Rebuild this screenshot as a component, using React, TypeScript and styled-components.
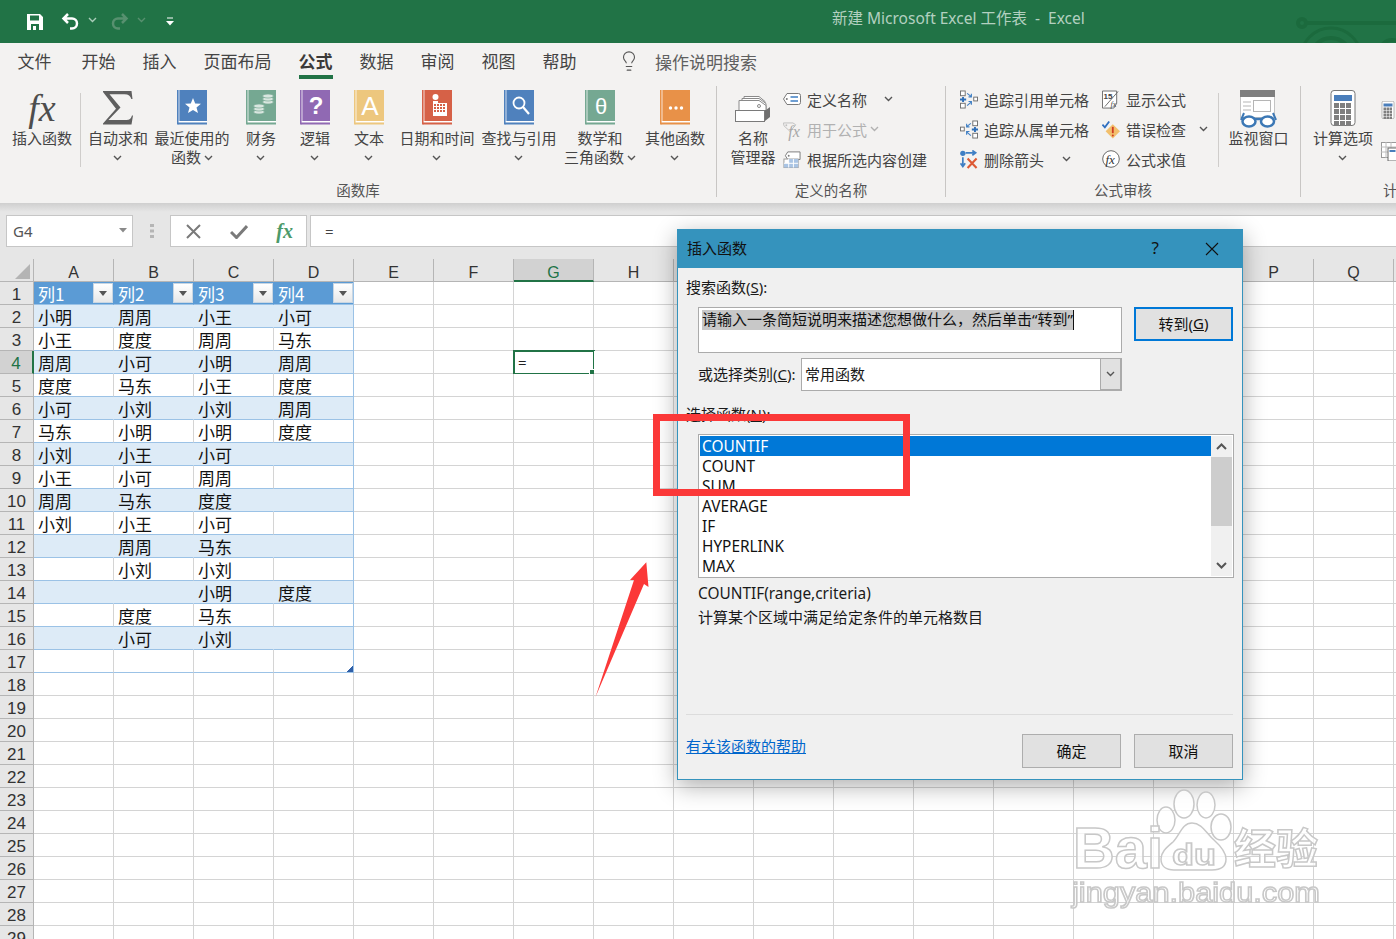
import React from 'react';
import styled, { createGlobalStyle } from 'styled-components';
import { Lightbulb } from 'lucide-react';

const CJK = `"Noto Sans CJK SC", sans-serif`;
const LATIN = `"Noto Sans", "Noto Sans CJK SC", sans-serif`;

const GlobalStyle = createGlobalStyle`
  html, body {
    margin: 0;
    padding: 0;
    background: #fff;
  }
  * {
    box-sizing: border-box;
  }
`;

const Page = styled.div`
  position: relative;
  width: 1396px;
  height: 939px;
  overflow: hidden;
  display: flex;
  flex-direction: column;
  font-family: ${CJK};
  color: #444;
`;

/* ---------- title bar ---------- */

const TitleBar = styled.div`
  position: relative;
  flex: none;
  height: 43px;
  background: #217346;
  display: flex;
  align-items: center;
  padding-left: 27px;
`;

const QuickButton = styled.span<{ $ml?: number; $mb?: number }>`
  display: flex;
  margin-left: ${(p) => p.$ml ?? 0}px;
  margin-bottom: ${(p) => p.$mb ?? 0}px;
`;

const DocTitle = styled.div`
  margin-left: 658px;
  margin-top: -9px;
  font-family: ${LATIN};
  font-size: 15.5px;
  color: #b3d0c0;
  white-space: pre;
`;

const TitleArt = styled.svg`
  position: absolute;
  right: 0;
  top: 0;
`;

/* ---------- ribbon tabs ---------- */

const TabBar = styled.div`
  flex: none;
  height: 36px;
  background: #f3f2f1;
  display: flex;
  padding-left: 4px;
`;

const Tab = styled.div<{ $active?: boolean }>`
  position: relative;
  height: 36px;
  padding: 0 13.5px;
  font-size: 17px;
  line-height: 36px;
  font-weight: ${(p) => (p.$active ? 700 : 400)};
  color: ${(p) => (p.$active ? '#3b3a39' : '#444')};
  &:first-child {
    margin-right: 3px;
  }
  &::after {
    content: '';
    display: ${(p) => (p.$active ? 'block' : 'none')};
    position: absolute;
    left: 13.5px;
    right: 13.5px;
    bottom: 0;
    height: 4px;
    background: #217346;
  }
`;

const TellMe = styled.div`
  display: flex;
  align-items: center;
  margin-left: 28px;
  font-size: 17px;
  color: #5f5f5f;
  gap: 15px;
`;

/* ---------- ribbon body ---------- */

const Ribbon = styled.div`
  flex: none;
  height: 124px;
  background: #f3f2f1;
  padding-top: 7px;
  display: flex;
`;

const Group = styled.div<{ $w: number }>`
  flex: none;
  width: ${(p) => p.$w}px;
  height: 111px;
  border-right: 1px solid #c8c6c4;
  display: flex;
  flex-direction: column;
`;

const GroupBody = styled.div<{ $pl: number }>`
  flex: 1;
  display: flex;
  padding-left: ${(p) => p.$pl}px;
`;

const GroupLabel = styled.div`
  flex: none;
  height: 22px;
  line-height: 22px;
  margin-bottom: -4px;
  text-align: center;
  font-size: 14.5px;
  color: #555;
`;

const BigButton = styled.div<{ $w: number }>`
  flex: none;
  width: ${(p) => p.$w}px;
  padding-top: 4px;
  display: flex;
  flex-direction: column;
  align-items: center;
`;

const BigIcon = styled.div<{ $pt?: number }>`
  height: 36px;
  padding-top: ${(p) => p.$pt ?? 0}px;
  display: flex;
  align-items: flex-start;
  justify-content: center;
`;

const BigText = styled.div`
  margin-top: 2px;
  font-size: 15px;
  line-height: 19px;
  color: #444;
  text-align: center;
  white-space: nowrap;
`;

const Caret = styled.svg<{ $ml?: number }>`
  margin-left: ${(p) => p.$ml ?? 0}px;
  vertical-align: 2px;
  display: inline-block;
`;

const VLine = styled.div<{ $ml?: number; $mr?: number }>`
  flex: none;
  width: 1px;
  height: 74px;
  margin: 7px ${(p) => p.$mr ?? 0}px 0 ${(p) => p.$ml ?? 0}px;
  background: #cfcdcb;
`;

const SmallList = styled.div<{ $w: number; $ml?: number }>`
  flex: none;
  width: ${(p) => p.$w}px;
  margin-top: -2px;
  margin-left: ${(p) => p.$ml ?? 0}px;
`;

const SmallRow = styled.div<{ $off?: boolean }>`
  height: 30px;
  display: flex;
  align-items: center;
  gap: 6px;
  font-size: 15px;
  white-space: nowrap;
  color: ${(p) => (p.$off ? '#b1b1b1' : '#444')};
`;

const SmallIconBox = styled.span`
  flex: none;
  width: 18px;
  height: 18px;
  display: flex;
`;

const SideIcons = styled.div`
  flex: none;
  margin-left: 5px;
  padding-top: 15px;
  display: flex;
  flex-direction: column;
  gap: 23px;
`;

/* ---------- formula bar ---------- */

const FormulaBar = styled.div`
  flex: none;
  height: 56px;
  padding: 12px 0 0 6px;
  display: flex;
  align-items: flex-start;
  background: linear-gradient(#cfcfcf 0, #e6e6e6 9px);
`;

const NameBox = styled.div`
  flex: none;
  width: 127px;
  height: 32px;
  background: #fff;
  border: 1px solid #c6c6c6;
  display: flex;
  align-items: center;
`;

const ActionBox = styled(NameBox)`
  width: 137px;
  justify-content: space-between;
  padding: 0 13px 0 15px;
`;

const FormulaInput = styled(NameBox)`
  flex: 1;
  width: auto;
  margin-left: 3px;
  border-right: none;
`;

const NameValue = styled.span`
  flex: 1;
  padding-left: 6px;
  font-family: ${LATIN};
  font-size: 15px;
  color: #555;
`;

const Grip = styled.div`
  flex: none;
  width: 37px;
  height: 32px;
  display: flex;
  align-items: center;
  justify-content: center;
`;

const FxMark = styled.span`
  font-family: 'Liberation Serif', serif;
  font-style: italic;
  font-weight: 700;
  font-size: 20px;
  color: #4c9a6a;
`;

const FormulaText = styled.span`
  padding-left: 14px;
  font-family: ${LATIN};
  font-size: 15px;
  color: #444;
`;

/* ---------- sheet ---------- */

const Sheet = styled.div`
  flex: 1;
  min-height: 0;
  display: flex;
  flex-direction: column;
  font-family: ${CJK};
`;

const SheetRow = styled.div`
  flex: none;
  height: 23px;
  display: flex;
`;

const Corner = styled.div`
  flex: none;
  width: 34px;
  background: #e6e6e6;
  border-right: 1px solid #b5b5b5;
  border-bottom: 1px solid #b5b5b5;
  display: flex;
  align-items: flex-end;
  justify-content: flex-end;
  padding: 0 3px 2px 0;
`;

const ColHead = styled.div<{ $on?: boolean }>`
  flex: none;
  width: 80px;
  background: ${(p) => (p.$on ? '#d2d2d2' : '#e6e6e6')};
  border-right: 1px solid #b5b5b5;
  border-bottom: ${(p) => (p.$on ? '2px solid #217346' : '1px solid #b5b5b5')};
  padding-top: 3px;
  text-align: center;
  font-family: 'Liberation Sans', sans-serif;
  font-size: 16px;
  line-height: 22px;
  color: ${(p) => (p.$on ? '#217346' : '#333')};
`;

const RowHead = styled.div<{ $on?: boolean }>`
  flex: none;
  width: 34px;
  background: ${(p) => (p.$on ? '#d2d2d2' : '#e6e6e6')};
  border-right: ${(p) => (p.$on ? '2px solid #217346' : '1px solid #b5b5b5')};
  border-bottom: 1px solid #b5b5b5;
  text-align: center;
  font-family: 'Liberation Sans', sans-serif;
  font-size: 17px;
  line-height: 25px;
  color: ${(p) => (p.$on ? '#217346' : '#333')};
`;

type Tone = 'plain' | 'head' | 'band' | 'body';

const toneBg: Record<Tone, string> = { plain: '#fff', head: '#5b9bd5', band: '#ddebf7', body: '#fff' };

const Cell = styled.div<{ $tone: Tone; $last?: boolean }>`
  position: relative;
  flex: none;
  width: 80px;
  height: 23px;
  padding-left: 4px;
  display: flex;
  align-items: center;
  background: ${(p) => toneBg[p.$tone]};
  border-bottom: 1px solid ${(p) => (p.$tone === 'plain' ? '#d4d4d4' : '#9bc2e6')};
  border-right: 1px solid
    ${(p) =>
      p.$last
        ? '#9bc2e6'
        : p.$tone === 'plain' || p.$tone === 'body'
          ? '#d4d4d4'
          : toneBg[p.$tone]};
  font-size: 17px;
  color: ${(p) => (p.$tone === 'head' ? '#fff' : '#111')};
`;

const FilterButton = styled.span`
  flex: none;
  margin-left: auto;
  width: 20px;
  height: 20px;
  background: linear-gradient(#fff, #e8e8e8);
  border: 1px solid #c9d6e2;
  display: flex;
  align-items: center;
  justify-content: center;
  &::after {
    content: '';
    border: 4px solid transparent;
    border-top: 5px solid #555;
    border-bottom: 0;
  }
`;

const ActiveFrame = styled.div`
  position: absolute;
  left: -1px;
  top: -1px;
  width: 82px;
  height: 25px;
  border: 2px solid #217346;
  padding-left: 3px;
  font-family: ${LATIN};
  font-size: 15px;
  line-height: 20px;
  color: #222;
  &::after {
    content: '';
    position: absolute;
    right: -3px;
    bottom: -3px;
    width: 5px;
    height: 5px;
    background: #217346;
    border: 1px solid #fff;
  }
`;

const ResizeCorner = styled.span`
  position: absolute;
  right: 0;
  bottom: 0;
  width: 6px;
  height: 6px;
  background: linear-gradient(135deg, transparent 45%, #2f5fa8 45%);
`;

/* ---------- dialog ---------- */

const Dialog = styled.div`
  position: absolute;
  left: 677px;
  top: 229px;
  width: 566px;
  height: 551px;
  background: #f0f0f0;
  border: 1px solid #3593bd;
  box-shadow: 0 6px 22px rgba(0, 0, 0, 0.32);
  display: flex;
  flex-direction: column;
  font-family: ${LATIN};
  font-size: 15px;
  color: #1a1a1a;
`;

const DialogHead = styled.div`
  flex: none;
  height: 38px;
  background: #3593bd;
  display: flex;
  align-items: center;
  padding: 0 23px 0 9px;
  font-size: 15px;
  color: #111;
`;

const HeadTitle = styled.span`
  flex: 1;
  margin-top: -4px;
`;

const HeadHelp = styled.span`
  margin-right: 46px;
  font-size: 17px;
  margin-top: -3px;
`;

const DialogBody = styled.div`
  flex: 1;
  display: flex;
  flex-direction: column;
  padding: 9px 9px 11px 8px;
`;

const FieldLabel = styled.div<{ $mt?: number }>`
  height: 20px;
  line-height: 20px;
  margin-top: ${(p) => p.$mt ?? 0}px;
  white-space: nowrap;
`;

const Indented = styled.div<{ $mt: number }>`
  display: flex;
  margin-top: ${(p) => p.$mt}px;
  margin-left: 12px;
`;

const SearchBox = styled.div`
  flex: none;
  width: 424px;
  height: 46px;
  background: #fff;
  border: 1px solid #ababab;
  padding: 2px 0 0 3px;
  display: flex;
  align-items: flex-start;
`;

const SearchSelection = styled.span`
  background: #c8c8c8;
  height: 20px;
  line-height: 19px;
  border-right: 1px solid #111;
  white-space: nowrap;
  color: #111;
`;

const PushButton = styled.div<{ $focus?: boolean; $ml?: number }>`
  flex: none;
  width: 99px;
  height: 34px;
  margin-left: ${(p) => p.$ml ?? 0}px;
  padding-bottom: 2px;
  background: #e1e1e1;
  border: ${(p) => (p.$focus ? '2px solid #0078d7' : '1px solid #adadad')};
  display: flex;
  align-items: center;
  justify-content: center;
  color: #111;
`;

const CategoryLabel = styled.span`
  flex: none;
  width: 103px;
  line-height: 33px;
  white-space: nowrap;
`;

const SelectBox = styled.div`
  flex: none;
  width: 321px;
  height: 33px;
  background: #fff;
  border: 1px solid #ababab;
  padding-left: 3px;
  display: flex;
  align-items: center;
`;

const SelectValue = styled.span`
  flex: 1;
  margin-top: -2px;
`;

const SelectArrow = styled.span`
  flex: none;
  width: 21px;
  height: 31px;
  background: #e1e1e1;
  border-left: 1px solid #ababab;
  border-right: 1px solid #ababab;
  border-bottom: 1px solid #ababab;
  display: flex;
  align-items: center;
  justify-content: center;
`;

const FunctionList = styled.div`
  flex: none;
  width: 536px;
  height: 144px;
  background: #fff;
  border: 1px solid #ababab;
  padding: 1px;
  display: flex;
  overflow: hidden;
`;

const ListItems = styled.div`
  flex: 1;
`;

const ListItem = styled.div<{ $on?: boolean }>`
  height: 20px;
  line-height: 22px;
  padding-left: 2px;
  font-size: 15.4px;
  background: ${(p) => (p.$on ? '#0078d7' : 'transparent')};
  color: ${(p) => (p.$on ? '#fff' : '#111')};
`;

const ScrollTrack = styled.div`
  flex: none;
  width: 21px;
  background: #f0f0f0;
  display: flex;
  flex-direction: column;
  align-items: center;
`;

const ScrollEnd = styled.span`
  height: 21px;
  display: flex;
  align-items: center;
  justify-content: center;
`;

const ScrollThumb = styled.span`
  width: 100%;
  height: 69px;
  background: #cdcdcd;
`;

const ScrollFill = styled.span`
  flex: 1;
`;

const DetailLine = styled.div<{ $size: number; $lh: number }>`
  margin: 5px 0 0 12px;
  height: 20px;
  line-height: ${(p) => p.$lh}px;
  white-space: nowrap;
  font-size: ${(p) => p.$size}px;
`;

const Spacer = styled.div`
  flex: 1;
`;

const Divider = styled.div`
  flex: none;
  height: 1px;
  background: #dcdcdc;
`;

const DialogFoot = styled.div`
  flex: none;
  margin-top: 19px;
  display: flex;
  align-items: flex-start;
`;

const HelpLink = styled.a`
  flex: 1;
  margin-top: 2px;
  color: #0066cc;
  font-size: 15px;
  line-height: 20px;
  text-decoration: underline;
`;

/* ---------- annotations ---------- */

const RedFrame = styled.div`
  position: absolute;
  left: 653px;
  top: 414px;
  width: 257px;
  height: 82px;
  border: 7px solid #fb3838;
`;

const Overlay = styled.svg`
  position: absolute;
  left: 0;
  top: 0;
  pointer-events: none;
`;

/* ---------- icons ---------- */

const Chevron = ({ ml, color = '#555' }: { ml?: number; color?: string }) => (
  <Caret $ml={ml} width="9" height="6" viewBox="0 0 9 6">
    <path d="M1 1l3.5 3.5L8 1" fill="none" stroke={color} strokeWidth="1.4" />
  </Caret>
);

const Book = ({ color, children }: { color: string; children?: React.ReactNode }) => (
  <svg width="30" height="35" viewBox="0 0 30 35">
    <rect x="0" y="0" width="30" height="31" fill={color} />
    <rect x="1.5" y="0" width="1" height="31" fill="#fff" opacity="0.75" />
    <rect x="1.5" y="31" width="28.5" height="1.5" fill="#fff" />
    <rect x="0" y="31" width="1.5" height="3.5" fill={color} />
    <rect x="1" y="32.5" width="29" height="2" fill={color} />
    {children}
  </svg>
);

const Gridlet = ({ x, y, n, m, s, fill }: { x: number; y: number; n: number; m: number; s: number; fill: string }) => (
  <g fill={fill}>
    {Array.from({ length: n * m }).map((_, i) => (
      <rect key={i} x={x + (i % n) * (s + 1)} y={y + Math.floor(i / n) * (s + 1)} width={s} height={s} />
    ))}
  </g>
);

const SigmaIcon = () => (
  <svg width="30" height="35" viewBox="0 0 30 35">
    <path d="M0 1H28.500L29.500 9H28.300C27.500 6 25.500 4.200 21.500 4.200H6.500L17.500 17.500 5.500 30H23.500C26.500 30 28 28.500 29 25.500H30L28.500 34.500H0V33.500L13 18.800 0 2z" fill="#5f5f5f" />
  </svg>
);

const FxText = styled.span`
  font-family: 'Liberation Serif', serif;
  font-style: italic;
  font-size: 38px;
  line-height: 36px;
  color: #4d4d4d;
`;

const NameManagerIcon = () => (
  <svg width="36" height="26" viewBox="0 0 36 26">
    <g fill="#fff" stroke="#8a8a8a">
      <path d="M9 .5h15l6 5v7H9z" />
      <path d="M7 2.500h17l7 5v7H7z" />
      <path d="M4 4.500h20l7 5v7H4z" />
    </g>
    <circle cx="24" cy="10" r="1.500" fill="none" stroke="#8a8a8a" />
    <path d="M31 14l4-3v10l-5 4V14z" fill="#6f6f6f" />
    <rect x="0.500" y="14.500" width="29" height="11" fill="#fff" stroke="#7a7a7a" />
  </svg>
);

const TagIcon = () => (
  <svg width="18" height="18" viewBox="0 0 18 18">
    <path d="M4 3.500h11.500a2 2 0 012 2v7a2 2 0 01-2 2H4L.5 9z" fill="#fff" stroke="#7a7a7a" />
    <circle cx="3.800" cy="9" r="1" fill="#7a7a7a" />
    <path d="M7.500 7h7.500M7.500 11h7.500" stroke="#3f7fc4" strokeWidth="1.300" />
  </svg>
);

const TagFxIcon = () => (
  <svg width="19" height="22" viewBox="0 0 19 22">
    <path d="M.5 2.500h10l3 2-6 7-6.500-6z" fill="none" stroke="#c0c0c0" />
    <circle cx="3.500" cy="5" r="1" fill="#c0c0c0" />
    <text x="5.500" y="17" fontFamily="Liberation Serif, serif" fontStyle="italic" fontSize="17" fill="#a8a8a8">fx</text>
  </svg>
);

const TagTableIcon = () => (
  <svg width="19" height="19" viewBox="0 0 19 19">
    <path d="M5 1.500h13v8H5L2.500 5.500z" fill="#fff" stroke="#7a7a7a" />
    <circle cx="6" cy="5.500" r="1" fill="#7a7a7a" />
    <rect x="1" y="9" width="15" height="9" fill="#fff" stroke="#9a9a9a" />
    <rect x="6" y="9" width="10" height="4.500" fill="#a9c4e4" />
    <rect x="1" y="13.500" width="15" height="4.500" fill="#a9c4e4" />
    <path d="M6 9v9M11 9v9M1 13.500h15" stroke="#fff" />
  </svg>
);

const TraceIcon = ({ flip }: { flip?: boolean }) => (
  <svg width="19" height="19" viewBox="0 0 19 19">
    <g transform={flip ? 'translate(19 0) scale(-1 1)' : undefined}>
      <g fill="#fff" stroke="#6f6f6f">
        <rect x="0.500" y="0.500" width="5" height="5" />
        <rect x="0.500" y="13.500" width="5" height="5" />
        <rect x="14.500" y="7" width="4" height="4" />
      </g>
      <path d="M0 9.500h6.500M3.200 6.800v5.400" stroke="#2f6fb8" strokeWidth="2" fill="none" />
      <path d="M7.500 3l4.500 3.500M12 3.500v3.200H9M7.500 16l4.500-4M12 15v-3.400H9" fill="none" stroke="#3f7fc4" strokeWidth="1.200" />
    </g>
  </svg>
);

const RemoveArrowsIcon = () => (
  <svg width="19" height="19" viewBox="0 0 19 19">
    <circle cx="3" cy="3" r="2.800" fill="#3f7fc4" />
    <path d="M6 2.500h10M13 0l3.500 2.500L13 5M3 7v10M.5 13.500L3 17l2.500-3.500" fill="none" stroke="#3f7fc4" strokeWidth="1.800" />
    <path d="M8 8.500l9.500 10M17.500 8.500L8 18.500" stroke="#dd5a35" strokeWidth="2.200" />
  </svg>
);

const ShowFormulaIcon = () => (
  <svg width="19" height="20" viewBox="0 0 19 20">
    <path d="M.5.500h15v13l-3 5H.5z" fill="#fff" stroke="#6a6a6a" />
    <path d="M3 17L17 1" stroke="#6a6a6a" />
    <text x="1.500" y="9" fontFamily="Liberation Sans, sans-serif" fontWeight="700" fontSize="8.500" fill="#444">15</text>
    <text x="9" y="17" fontFamily="Liberation Serif, serif" fontStyle="italic" fontSize="8.500" fill="#444">fx</text>
  </svg>
);

const ErrorCheckIcon = () => (
  <svg width="20" height="20" viewBox="0 0 20 20">
    <path d="M12 3.500l8 8-8 8-8-8z" fill="#f2bf6c" />
    <path d="M12 6.500v7" stroke="#d13b22" strokeWidth="2" />
    <circle cx="12" cy="16" r="1.100" fill="#d13b22" />
    <path d="M.5 4l2.700 3L8 .5" fill="none" stroke="#2f6fc0" strokeWidth="2" />
  </svg>
);

const EvalIcon = () => (
  <svg width="18" height="18" viewBox="0 0 18 18">
    <circle cx="9" cy="9" r="8.300" fill="#fff" stroke="#6a6a6a" />
    <text x="3.500" y="13.500" fontFamily="Liberation Serif, serif" fontStyle="italic" fontSize="13" fill="#333">fx</text>
  </svg>
);

const WatchIcon = () => (
  <svg width="38" height="38" viewBox="0 0 38 38">
    <rect x="0.500" y="0.500" width="34" height="27" fill="#fff" stroke="#c4c4c4" />
    <rect x="0" y="0" width="35" height="7" fill="#7f7f7f" />
    <rect x="13.500" y="10.500" width="17" height="11" fill="#fff" stroke="#b5b5b5" />
    <path d="M3 12h8M3 16h8M3 20h8" stroke="#b5b5b5" />
    <path d="M1 30l3-7M36 30l-3-7" stroke="#3c78b5" strokeWidth="2" fill="none" />
    <ellipse cx="9" cy="31.500" rx="6.500" ry="5" fill="#fff" stroke="#3c78b5" strokeWidth="2.500" />
    <ellipse cx="27.500" cy="31.500" rx="6.500" ry="5" fill="#fff" stroke="#3c78b5" strokeWidth="2.500" />
    <path d="M14 29h8" stroke="#3c78b5" strokeWidth="2.500" />
  </svg>
);

const CalcIcon = ({ small }: { small?: boolean }) => (
  <svg width={small ? 14 : 26} height={small ? 18 : 36} viewBox="0 0 26 36">
    <rect x="1" y="0.500" width="24" height="35" rx="3" fill="#fff" stroke="#777" />
    <rect x="4" y="5" width="18" height="6" fill="#4a7ebb" />
    <Gridlet x={4} y={13} n={3} m={4} s={5} fill="#7f7f7f" />
  </svg>
);

const SheetCalcIcon = () => (
  <svg width="16" height="19" viewBox="0 0 16 19">
    <rect x="0.500" y="0.500" width="15" height="15" fill="#fff" stroke="#9a9a9a" />
    <path d="M0 5h16M0 10h16M5 0v16M10 0v16" stroke="#bcbcbc" />
    <rect x="7" y="6" width="9" height="13" fill="#fff" stroke="#6a6a6a" />
    <rect x="8.500" y="8" width="6" height="2" fill="#4a7ebb" />
  </svg>
);

const SmallChevronRow = ({ icon, text, off, gap }: { icon: React.ReactNode; text: string; off?: boolean; gap?: number }) => (
  <SmallRow $off={off}>
    <SmallIconBox>{icon}</SmallIconBox>
    <span>{text}</span>
    {gap !== undefined && <Chevron ml={gap} color={off ? '#b1b1b1' : '#555'} />}
  </SmallRow>
);

/* ---------- data ---------- */

const tabs = ['文件', '开始', '插入', '页面布局', '公式', '数据', '审阅', '视图', '帮助'];

const libraryButtons: { w: number; lines: string[]; inlineCaret?: boolean; icon: React.ReactNode }[] = [
  { w: 64, lines: ['自动求和'], icon: <SigmaIcon /> },
  {
    w: 84,
    lines: ['最近使用的', '函数'],
    inlineCaret: true,
    icon: (
      <Book color="#4f81bd">
        <polygon points="16,8 18.200,13.500 24,13.800 19.500,17.500 21,23 16,20 11,23 12.500,17.500 8,13.800 13.800,13.500" fill="#fff" />
      </Book>
    ),
  },
  {
    w: 54,
    lines: ['财务'],
    icon: (
      <Book color="#75a892">
        <g fill="#d8e6df" stroke="#75a892" strokeWidth="0.700">
          <ellipse cx="22" cy="12" rx="5.500" ry="2" />
          <ellipse cx="22" cy="9" rx="5.500" ry="2" />
          <ellipse cx="22" cy="6" rx="5.500" ry="2" />
          <ellipse cx="13" cy="22" rx="5.500" ry="2" />
          <ellipse cx="13" cy="19" rx="5.500" ry="2" />
          <ellipse cx="13" cy="16" rx="5.500" ry="2" />
        </g>
      </Book>
    ),
  },
  {
    w: 54,
    lines: ['逻辑'],
    icon: (
      <Book color="#9069b3">
        <text x="16" y="24" textAnchor="middle" fontFamily="Liberation Sans, sans-serif" fontWeight="700" fontSize="24" fill="#fff">?</text>
      </Book>
    ),
  },
  {
    w: 54,
    lines: ['文本'],
    icon: (
      <Book color="#edc77e">
        <text x="16" y="25" textAnchor="middle" fontFamily="Liberation Sans, sans-serif" fontSize="26" fill="#fff">A</text>
      </Book>
    ),
  },
  {
    w: 82,
    lines: ['日期和时间'],
    icon: (
      <Book color="#d66147">
        <circle cx="13.500" cy="7" r="3" fill="#fff" />
        <rect x="11" y="11" width="5" height="3" fill="#fff" />
        <rect x="11" y="13" width="14" height="13" fill="#fff" />
        <Gridlet x={12} y={14} n={4} m={3} s={2} fill="#d66147" />
      </Book>
    ),
  },
  {
    w: 82,
    lines: ['查找与引用'],
    icon: (
      <Book color="#4f81bd">
        <circle cx="15" cy="13" r="5.500" fill="none" stroke="#fff" strokeWidth="1.800" />
        <path d="M19 17l6 7" stroke="#fff" strokeWidth="2.200" />
      </Book>
    ),
  },
  {
    w: 80,
    lines: ['数学和', '三角函数'],
    inlineCaret: true,
    icon: (
      <Book color="#75a892">
        <text x="16" y="24" textAnchor="middle" fontFamily="Liberation Sans, sans-serif" fontSize="22" fill="#fff">θ</text>
      </Book>
    ),
  },
  {
    w: 70,
    lines: ['其他函数'],
    icon: (
      <Book color="#e89148">
        <circle cx="10.500" cy="18" r="1.700" fill="#fff" />
        <circle cx="16" cy="18" r="1.700" fill="#fff" />
        <circle cx="21.500" cy="18" r="1.700" fill="#fff" />
      </Book>
    ),
  },
];

const columns = 'ABCDEFGHIJKLMNOPQR'.split('');

const tableRows: string[][] = [
  ['小明', '周周', '小王', '小可'],
  ['小王', '度度', '周周', '马东'],
  ['周周', '小可', '小明', '周周'],
  ['度度', '马东', '小王', '度度'],
  ['小可', '小刘', '小刘', '周周'],
  ['马东', '小明', '小明', '度度'],
  ['小刘', '小王', '小可', ''],
  ['小王', '小可', '周周', ''],
  ['周周', '马东', '度度', ''],
  ['小刘', '小王', '小可', ''],
  ['', '周周', '马东', ''],
  ['', '小刘', '小刘', ''],
  ['', '', '小明', '度度'],
  ['', '度度', '马东', ''],
  ['', '小可', '小刘', ''],
  ['', '', '', ''],
];

const functions = ['COUNTIF', 'COUNT', 'SUM', 'AVERAGE', 'IF', 'HYPERLINK', 'MAX'];

/* ---------- sheet parts ---------- */

function SheetGrid() {
  const rows = Array.from({ length: 29 }, (_, i) => i + 1);
  return (
    <Sheet>
      <SheetRow>
        <Corner>
          <svg width="15" height="15" viewBox="0 0 15 15">
            <polygon points="15,0 15,15 0,15" fill="#b4b4b4" />
          </svg>
        </Corner>
        {columns.map((c) => (
          <ColHead key={c} $on={c === 'G'}>{c}</ColHead>
        ))}
      </SheetRow>
      {rows.map((n) => {
        const data = n >= 2 && n <= 17 ? tableRows[n - 2] : null;
        return (
          <SheetRow key={n}>
            <RowHead $on={n === 4}>{n}</RowHead>
            {columns.map((c, ci) => {
              if (n === 1 && ci < 4) {
                return (
                  <Cell key={c} $tone="head" $last={ci === 3}>
                    列{ci + 1}
                    <FilterButton />
                  </Cell>
                );
              }
              if (data && ci < 4) {
                return (
                  <Cell key={c} $tone={n % 2 === 0 ? 'band' : 'body'} $last={ci === 3}>
                    {data[ci]}
                    {n === 17 && ci === 3 && <ResizeCorner />}
                  </Cell>
                );
              }
              return (
                <Cell key={c} $tone="plain">
                  {n === 4 && c === 'G' && <ActiveFrame>=</ActiveFrame>}
                </Cell>
              );
            })}
          </SheetRow>
        );
      })}
    </Sheet>
  );
}

function InsertFunctionDialog() {
  return (
    <Dialog>
      <DialogHead>
        <HeadTitle>插入函数</HeadTitle>
        <HeadHelp>?</HeadHelp>
        <svg width="14" height="14" viewBox="0 0 14 14">
          <path d="M1 1l12 12M13 1L1 13" stroke="#111" strokeWidth="1.100" />
        </svg>
      </DialogHead>
      <DialogBody>
        <FieldLabel>搜索函数(<u>S</u>):</FieldLabel>
        <Indented $mt={10}>
          <SearchBox>
            <SearchSelection>请输入一条简短说明来描述您想做什么，然后单击“转到”</SearchSelection>
          </SearchBox>
          <PushButton $focus $ml={12}>转到(<u>G</u>)</PushButton>
        </Indented>
        <Indented $mt={5}>
          <CategoryLabel>或选择类别(<u>C</u>):</CategoryLabel>
          <SelectBox>
            <SelectValue>常用函数</SelectValue>
            <SelectArrow>
              <Chevron />
            </SelectArrow>
          </SelectBox>
        </Indented>
        <FieldLabel $mt={13}>选择函数(<u>N</u>):</FieldLabel>
        <Indented $mt={10}>
          <FunctionList>
            <ListItems>
              {functions.map((f, i) => (
                <ListItem key={f} $on={i === 0}>{f}</ListItem>
              ))}
            </ListItems>
            <ScrollTrack>
              <ScrollEnd>
                <svg width="11" height="7" viewBox="0 0 11 7">
                  <path d="M1 6l4.500-4.500L10 6" fill="none" stroke="#555" strokeWidth="2" />
                </svg>
              </ScrollEnd>
              <ScrollThumb />
              <ScrollFill />
              <ScrollEnd>
                <svg width="11" height="7" viewBox="0 0 11 7">
                  <path d="M1 1l4.500 4.500L10 1" fill="none" stroke="#555" strokeWidth="2" />
                </svg>
              </ScrollEnd>
            </ScrollTrack>
          </FunctionList>
        </Indented>
        <DetailLine $size={15.4} $lh={22}>COUNTIF(range,criteria)</DetailLine>
        <DetailLine $size={15} $lh={18}>计算某个区域中满足给定条件的单元格数目</DetailLine>
        <Spacer />
        <Divider />
        <DialogFoot>
          <HelpLink>有关该函数的帮助</HelpLink>
          <PushButton>确定</PushButton>
          <PushButton $ml={13}>取消</PushButton>
        </DialogFoot>
      </DialogBody>
    </Dialog>
  );
}

const wmText = {
  fill: 'rgba(255,255,255,0.75)',
  stroke: '#c8c8c8',
  strokeWidth: 1.5,
  filter: 'url(#wmBlur)',
};

function Annotations() {
  return (
    <Overlay width="1396" height="939" viewBox="0 0 1396 939">
      <defs>
        <filter id="wmBlur" x="-10%" y="-10%" width="120%" height="120%">
          <feGaussianBlur stdDeviation="0.600" />
        </filter>
      </defs>
      <polygon points="595.500,697 634,580 630,580 646.300,562.300 648.500,587 644,584" fill="#fb3838" />
      <g {...wmText}>
        <ellipse cx="1166" cy="820" rx="9" ry="13" />
        <ellipse cx="1184" cy="804" rx="10" ry="14" />
        <ellipse cx="1206" cy="805" rx="9" ry="13" />
        <ellipse cx="1221" cy="827" rx="10" ry="13" />
        <path d="M1192 823c10 0 14 10 22 17 10 9 12 14 12 19 0 8-6 11-14 11h-38c-8 0-13-4-13-11 0-7 5-11 12-17 7-7 9-19 19-19z" />
        <text x="1073" y="868" fontFamily="Liberation Sans, sans-serif" fontWeight="700" fontSize="58" textLength="90" lengthAdjust="spacingAndGlyphs">Bai</text>
        <text x="1172" y="865" fontFamily="Liberation Sans, sans-serif" fontWeight="700" fontSize="30" textLength="44" lengthAdjust="spacingAndGlyphs">du</text>
        <text x="1234" y="864" fontFamily="Noto Sans CJK SC, sans-serif" fontWeight="700" fontSize="42">经验</text>
        <text x="1072" y="902" fontFamily="Liberation Sans, sans-serif" fontSize="28" textLength="248" lengthAdjust="spacingAndGlyphs">jingyan.baidu.com</text>
      </g>
    </Overlay>
  );
}

export default function App() {
  return (
    <Page>
      <GlobalStyle />
      <TitleBar>
        <QuickButton>
          <svg width="16" height="16" viewBox="0 0 16 16">
            <path fillRule="evenodd" d="M0 0h13l3 3v13H0zM3 1.500v5h9v-5zM4 10v6h2v-4h3v4h3v-6z" fill="#fff" />
          </svg>
        </QuickButton>
        <QuickButton $ml={18}>
          <svg width="19" height="19" viewBox="0 0 19 19">
            <path d="M7 2L2.500 6.500 7 11M3 6.500h8a5 5 0 010 10H9" fill="none" stroke="#fff" strokeWidth="2.500" />
          </svg>
        </QuickButton>
        <QuickButton $ml={8} $mb={4}><Chevron color="#a9cdb9" /></QuickButton>
        <QuickButton $ml={13}>
          <svg width="19" height="19" viewBox="0 0 19 19">
            <path d="M12 2l4.500 4.500L12 11M16 6.500H8a5 5 0 000 10h2" fill="none" stroke="#57906f" strokeWidth="2.500" />
          </svg>
        </QuickButton>
        <QuickButton $ml={8} $mb={4}><Chevron color="#57906f" /></QuickButton>
        <QuickButton $ml={20}>
          <svg width="8" height="9" viewBox="0 0 8 9">
            <path d="M1 1h6" stroke="#fff" />
            <path d="M0 4h8L4 8.500z" fill="#fff" />
          </svg>
        </QuickButton>
        <DocTitle>新建 Microsoft Excel 工作表  -  Excel</DocTitle>
        <TitleArt width="100" height="43" viewBox="0 0 100 43">
          <g fill="none" stroke="#1b6a3d" strokeWidth="4">
            <circle cx="6" cy="23" r="4" />
            <path d="M10 23h90" />
            <circle cx="35" cy="58" r="20" />
            <circle cx="35" cy="58" r="30" strokeWidth="3" />
            <circle cx="96" cy="52" r="12" />
          </g>
        </TitleArt>
      </TitleBar>

      <TabBar>
        {tabs.map((t) => (
          <Tab key={t} $active={t === '公式'}>{t}</Tab>
        ))}
        <TellMe>
          <Lightbulb size={22} strokeWidth={1.200} color="#555" />
          操作说明搜索
        </TellMe>
      </TabBar>

      <Ribbon>
        <Group $w={717}>
          <GroupBody $pl={8}>
            <BigButton $w={68}>
              <BigIcon><FxText>fx</FxText></BigIcon>
              <BigText>插入函数</BigText>
            </BigButton>
            <VLine $ml={4} $mr={5} />
            {libraryButtons.map((b) => (
              <BigButton key={b.lines[0]} $w={b.w}>
                <BigIcon>{b.icon}</BigIcon>
                <BigText>
                  {b.lines[0]}
                  <br />
                  {b.lines[1]}
                  {b.inlineCaret ? <Chevron ml={3} /> : <Chevron />}
                </BigText>
              </BigButton>
            ))}
          </GroupBody>
          <GroupLabel>函数库</GroupLabel>
        </Group>

        <Group $w={229}>
          <GroupBody $pl={12}>
            <BigButton $w={48}>
              <BigIcon $pt={6}><NameManagerIcon /></BigIcon>
              <BigText>名称<br />管理器</BigText>
            </BigButton>
            <SmallList $w={160} $ml={6}>
              <SmallChevronRow icon={<TagIcon />} text="定义名称" gap={11} />
              <SmallChevronRow icon={<TagFxIcon />} text="用于公式" off gap={-3} />
              <SmallChevronRow icon={<TagTableIcon />} text="根据所选内容创建" />
            </SmallList>
          </GroupBody>
          <GroupLabel>定义的名称</GroupLabel>
        </Group>

        <Group $w={355}>
          <GroupBody $pl={14}>
            <SmallList $w={142}>
              <SmallChevronRow icon={<TraceIcon />} text="追踪引用单元格" />
              <SmallChevronRow icon={<TraceIcon flip />} text="追踪从属单元格" />
              <SmallChevronRow icon={<RemoveArrowsIcon />} text="删除箭头" gap={12} />
            </SmallList>
            <SmallList $w={116}>
              <SmallChevronRow icon={<ShowFormulaIcon />} text="显示公式" />
              <SmallChevronRow icon={<ErrorCheckIcon />} text="错误检查" gap={7} />
              <SmallChevronRow icon={<EvalIcon />} text="公式求值" />
            </SmallList>
            <VLine />
            <BigButton $w={79}>
              <BigIcon><WatchIcon /></BigIcon>
              <BigText>监视窗口</BigText>
            </BigButton>
          </GroupBody>
          <GroupLabel>公式审核</GroupLabel>
        </Group>

        <Group $w={194}>
          <GroupBody $pl={9}>
            <BigButton $w={66}>
              <BigIcon><CalcIcon /></BigIcon>
              <BigText>计算选项<br /><Chevron /></BigText>
            </BigButton>
            <SideIcons>
              <CalcIcon small />
              <SheetCalcIcon />
            </SideIcons>
          </GroupBody>
          <GroupLabel>计算</GroupLabel>
        </Group>
      </Ribbon>

      <FormulaBar>
        <NameBox>
          <NameValue>G4</NameValue>
          <svg width="16" height="8" viewBox="0 0 16 8">
            <path d="M3 1h8L7 5.500z" fill="#8a8a8a" />
          </svg>
        </NameBox>
        <Grip>
          <svg width="4" height="14" viewBox="0 0 4 14">
            <path d="M0 0h4v3H0zM0 5.500h4v3H0zM0 11h4v3H0z" fill="#b5b5b5" />
          </svg>
        </Grip>
        <ActionBox>
          <svg width="15" height="15" viewBox="0 0 15 15">
            <path d="M1 1l13 13M14 1L1 14" stroke="#7a7a7a" strokeWidth="2" />
          </svg>
          <svg width="18" height="15" viewBox="0 0 18 15">
            <path d="M1 8l5.500 5.500L17 2" fill="none" stroke="#7a7a7a" strokeWidth="3" />
          </svg>
          <FxMark>fx</FxMark>
        </ActionBox>
        <FormulaInput>
          <FormulaText>=</FormulaText>
        </FormulaInput>
      </FormulaBar>

      <SheetGrid />
      <InsertFunctionDialog />
      <RedFrame />
      <Annotations />
    </Page>
  );
}
